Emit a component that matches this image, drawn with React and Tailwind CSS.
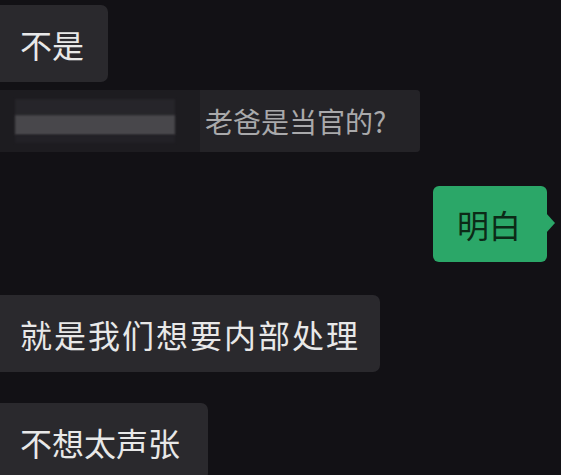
const font = {
  fontFamily: '"Noto Sans CJK SC", "Noto Sans", sans-serif',
};

function Bubble({ text, className = "" }) {
  return (
    <div
      className={`shrink-0 h-[77px] flex items-center pl-[20px] bg-[#2a292d] rounded-r-[7px] text-[#e8e8e8] text-[32px] leading-none ${className}`}
    >
      {text}
    </div>
  );
}

export default function App() {
  return (
    <div
      className="w-[561px] h-[475px] overflow-hidden bg-[#121115] flex flex-col"
      style={font}
    >
      {/* first incoming message */}
      <div className="shrink-0 pt-[5px]">
        <Bubble text="不是" className="w-[108px]" />
      </div>

      {/* quoted reply */}
      <div className="shrink-0 mt-[8px] h-[62px] w-[420px] flex bg-[#1d1c20] rounded-r-[4px]">
        <div className="w-[200px] flex flex-col justify-center pl-[15px]">
          <div className="w-[160px] h-[16px] bg-[#26252a] blur-[1px]" />
          <div className="w-[160px] h-[20px] bg-[#48474b] blur-[1px]" />
          <div className="w-[160px] h-[8px] bg-[#222126] blur-[1px]" />
        </div>
        <div className="flex-1 flex items-center pl-[5px] bg-[#242327] rounded-r-[4px] text-[28px] leading-none text-[#a9a9ab]">
          老爸是当官的?
        </div>
      </div>

      {/* outgoing message */}
      <div className="shrink-0 mt-[34px] flex justify-end pr-[14px]">
        <div className="relative h-[76px] w-[114px] flex items-center pl-[24px] bg-[#2ba768] rounded-[6px] text-[32px] leading-none text-[#0c2a17]">
          明白
          <div className="absolute right-[-8px] top-[27px] w-0 h-0 border-y-[10px] border-y-transparent border-l-[9px] border-l-[#2ba768]" />
        </div>
      </div>

      <div className="shrink-0 mt-[33px]">
        <Bubble
          text="就是我们想要内部处理"
          className="w-[380px] tracking-[2px]"
        />
      </div>

      <div className="shrink-0 mt-[31px]">
        <Bubble text="不想太声张" className="w-[208px]" />
      </div>
    </div>
  );
}
